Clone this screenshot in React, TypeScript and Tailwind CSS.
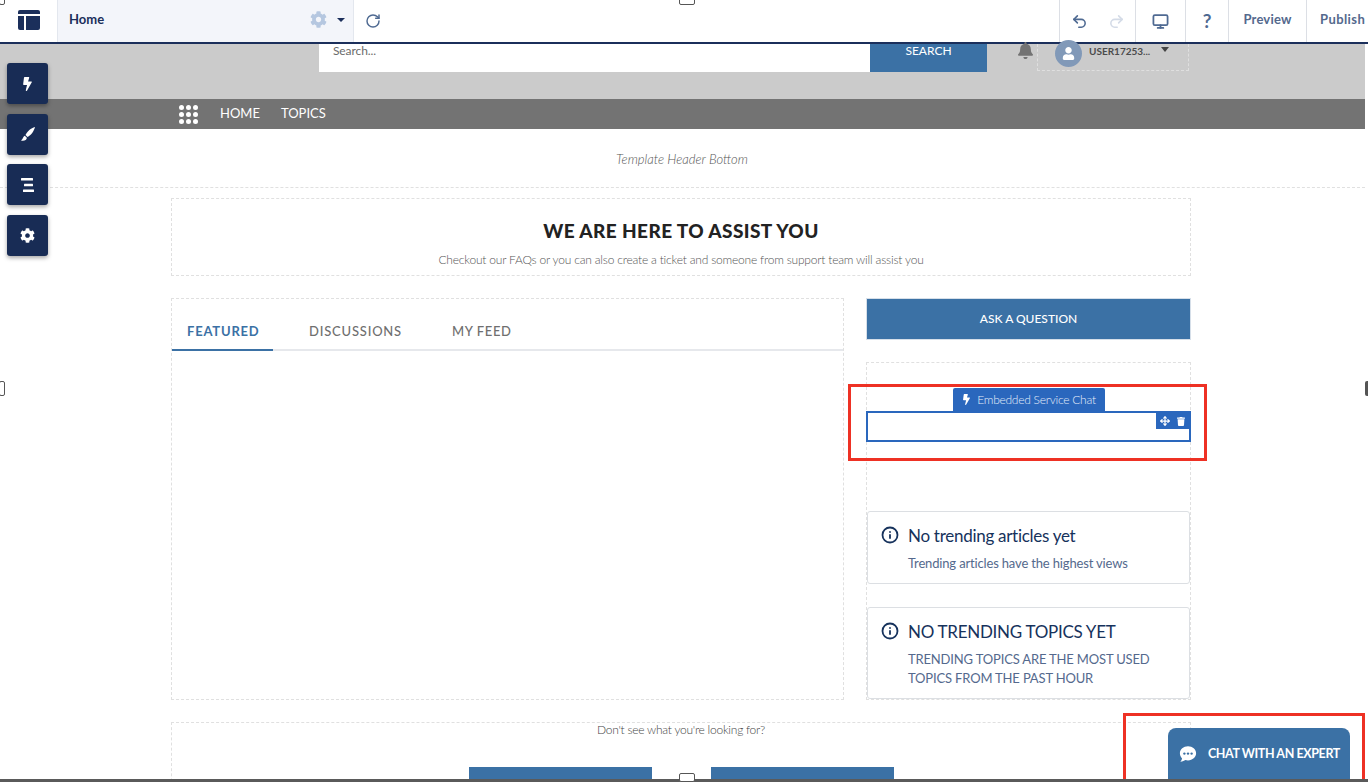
import { FaBell, FaBolt, FaCog, FaTrash, FaUser } from "react-icons/fa";
import { Info, Monitor, Move, Redo2, RotateCw, Undo2 } from "lucide-react";

function Toolbar() {
  return (
    <header className="h-[44px] flex border-b-2 border-[#1b2f5b] bg-white">
      <div className="w-[57px] flex items-center justify-center pb-[3px]">
        <svg viewBox="0 0 22 20" className="w-[22px] h-[20px] text-[#1b2f5b]" fill="currentColor">
          <path d="M2 0h18a2 2 0 0 1 2 2v2H0V2a2 2 0 0 1 2-2z" />
          <path d="M0 6h6v14H2a2 2 0 0 1-2-2z" />
          <path d="M8 6h14v12a2 2 0 0 1-2 2H8z" />
        </svg>
      </div>
      <div className="w-[297px] bg-[#f3f5fa] border-x border-[#e3e7ee] flex items-center pl-[11px] pb-[3px]">
        <span className="w-[241px] text-[13px] font-bold text-[#1b2f5b]">Home</span>
        <FaCog className="shrink-0 w-[17px] h-[17px] text-[#b5c7e0]" />
        <span className="ml-[10px] w-0 h-0 border-x-[4px] border-x-transparent border-t-[4px] border-t-[#1b2f5b]" />
      </div>
      <div className="flex-1 flex items-center pl-[11px] pb-[1px]">
        <RotateCw className="w-[16px] h-[16px] text-[#4f6a92]" strokeWidth={2.2} />
      </div>
      <div className="flex h-full">
        <div className="w-[76px] border-l border-[#dcdfe5] flex items-center justify-center gap-[20px]">
          <Undo2 className="w-[17px] h-[17px] text-[#4f6a92]" strokeWidth={2.2} />
          <Redo2 className="w-[17px] h-[17px] text-[#d4dbe7]" strokeWidth={2.2} />
        </div>
        <div className="w-[50px] border-l border-[#dcdfe5] flex items-center justify-center">
          <Monitor className="w-[17px] h-[17px] text-[#4f6a92]" strokeWidth={2.5} />
        </div>
        <div className="w-[43px] border-l border-[#dcdfe5] flex items-center justify-center text-[19px] font-bold text-[#4f6a92]">?</div>
        <div className="w-[78px] border-l border-[#dcdfe5] flex items-center justify-center pb-[3px] text-[13px] font-bold tracking-[0.2px] text-[#54698d]">Preview</div>
        <div className="w-[62px] border-l border-[#dcdfe5] flex items-center pl-[13px] pb-[3px] text-[13px] font-bold tracking-[0.4px] text-[#54698d]">Publish</div>
      </div>
    </header>
  );
}

function SiteHeader() {
  return (
    <>
      <div className="h-[55px] w-[1365px] bg-[#cbcbcb] flex items-start pl-[319px]">
        <div className="w-[551px] h-[28px] bg-white pl-[14px] text-[12px] leading-[13px] tracking-[-0.1px] text-[#6b6b6b]">Search...</div>
        <div className="w-[117px] h-[28px] bg-[#3b71a5] flex items-center justify-center text-[12px] leading-[13px] pb-[15px] text-white">SEARCH</div>
        <FaBell className="-mt-[2px] ml-[30px] w-[17px] h-[17px] text-[#737373]" />
        <div className="ml-[3px] w-[152px] h-[27px] border border-dashed border-[#dfdfdf] border-t-0 flex items-start pl-[17px]">
          <div className="-mt-[4px] w-[27px] h-[27px] rounded-full bg-[#8199b8] flex items-center justify-center">
            <FaUser className="w-[13px] h-[13px] text-white" />
          </div>
          <span className="ml-[7px] text-[10px] leading-[14px] font-bold text-[#4b4b4b]">USER17253...</span>
          <span className="ml-[11px] mt-[3px] w-0 h-0 border-x-[4px] border-x-transparent border-t-[5px] border-t-[#444]" />
        </div>
      </div>
      <nav className="h-[30px] w-[1365px] bg-[#737373] flex items-center pl-[179px] text-[13px] text-white">
        <div className="grid grid-cols-3 gap-[2px]">
          {[0, 1, 2, 3, 4, 5, 6, 7, 8].map((n) => (
            <span key={n} className="w-[5px] h-[5px] rounded-full bg-white" />
          ))}
        </div>
        <span className="ml-[22px]">HOME</span>
        <span className="ml-[21px]">TOPICS</span>
      </nav>
      <div className="h-[59px] w-[1365px] border-b border-dashed border-[#e0e0e0] flex items-center justify-center">
        <span className="text-[13px] italic font-light text-[#555] mt-[3px] -ml-[1px]">Template Header Bottom</span>
      </div>
    </>
  );
}

function Tabs() {
  return (
    <div className="w-[673px] h-[402px] border border-dashed border-[#e0e0e0]">
      <div className="mt-[16px] h-[36px] flex border-b-2 border-[#e6e8ec] text-[13px] font-bold tracking-[0.8px]">
        <div className="w-[101px] h-[36px] pl-[15px] pt-[7px] border-b-2 border-[#3b71a5] text-[#3b71a5]">FEATURED</div>
        <div className="ml-[36px] pt-[7px] text-[#6f6f6f] font-medium">DISCUSSIONS</div>
        <div className="ml-[50px] pt-[7px] text-[#6f6f6f] font-medium tracking-[0.6px]">MY FEED</div>
      </div>
    </div>
  );
}

function EmptyCard({ title, body, className }: { title: string; body: React.ReactNode; className: string }) {
  return (
    <div className={`mx-px border border-[#dcdfe3] rounded-[3px] flex pl-[13px] ${className}`}>
      <Info className="mt-[14px] w-[18px] h-[18px] text-[#16325c] shrink-0" strokeWidth={2.4} />
      <div className="ml-[9px]">
        <div className="mt-[13px] text-[17px] leading-[22px] tracking-[-0.28px] text-[#16325c]">{title}</div>
        <div className="mt-[7px] text-[13px] leading-[19px] tracking-[-0.16px] text-[#54698d]">{body}</div>
      </div>
    </div>
  );
}

function Sidebar() {
  return (
    <div className="w-[325px]">
      <div className="h-[42px] bg-[#3b71a5] border border-[#d6dfe9] flex items-center justify-center text-[12px] font-medium text-white">ASK A QUESTION</div>
      <div className="mt-[22px] h-[338px] border border-dashed border-[#e0e0e0]">
        <div className="relative -mx-px mt-[48px] h-[31px] border-2 border-[#2a67bd]">
          <div className="absolute -top-[25px] left-[85px] w-[152px] h-[23px] bg-[#2a67bd] rounded-t-[2px] flex items-center justify-center gap-[6px] text-[12px] tracking-[-0.25px] font-light text-[#e6eefa]">
            <FaBolt className="w-[9px] h-[11px] text-white" />
            Embedded Service Chat
          </div>
          <div className="absolute top-0 right-0 w-[33px] h-[16px] bg-[#2a67bd] flex items-center justify-center gap-[7px]">
            <Move className="w-[10px] h-[10px] text-white" strokeWidth={3} />
            <FaTrash className="w-[8px] h-[9px] text-white" />
          </div>
        </div>
        <div className="-mx-px">
          <EmptyCard className="mt-[69px] h-[73px]" title="No trending articles yet" body="Trending articles have the highest views" />
          <EmptyCard
            className="mt-[23px] h-[92px]"
            title="NO TRENDING TOPICS YET"
            body={
              <>
                TRENDING TOPICS ARE THE MOST USED
                <br />
                TOPICS FROM THE PAST HOUR
              </>
            }
          />
        </div>
      </div>
    </div>
  );
}

function SideButtons() {
  const icons = [
    <FaBolt key="bolt" className="w-[11px] h-[14px]" />,
    <svg key="brush" viewBox="0 0 14 14" className="w-[14px] h-[14px]" fill="currentColor">
      <path d="M14 0C10 1 6 4.500 4.500 8L6.500 10C10 8.500 13 4 14 0z" />
      <path d="M3.800 8.800C2 9.500 2.200 12 0 13.500C3 14.500 6 13 5.800 10.800z" />
    </svg>,
    <svg key="lines" viewBox="0 0 14 14" className="w-[14px] h-[14px]" fill="currentColor">
      <rect x="0" y="0" width="12" height="2.500" rx="0.500" />
      <rect x="3" y="5.700" width="9" height="2.500" rx="0.500" />
      <rect x="2" y="11.500" width="11" height="2.500" rx="0.500" />
    </svg>,
    <FaCog key="cog" className="w-[15px] h-[15px]" />,
  ];
  return (
    <div className="absolute left-[7px] top-[63px] flex flex-col gap-[9.5px]">
      {icons.map((icon, i) => (
        <div key={i} className="w-[41px] h-[41px] rounded-[3px] bg-[#182c55] text-white shadow-[0_2px_4px_rgba(0,0,0,0.35)] flex items-center justify-center">
          {icon}
        </div>
      ))}
    </div>
  );
}

function Handle({ className }: { className: string }) {
  return <div className={`absolute w-[16px] h-[9px] bg-white border border-[#555] rounded-[2px] ${className}`} />;
}

export default function App() {
  return (
    <div className="relative w-[1368px] h-[782px] overflow-hidden bg-white font-['Lato','Liberation_Sans',sans-serif]">
      <Toolbar />
      <SiteHeader />

      <main className="ml-[171px] w-[1020px]">
        <section className="mt-[10px] h-[78px] border border-dashed border-[#e0e0e0] flex flex-col items-center">
          <h2 className="mt-[20px] text-[19px] leading-[24px] font-black tracking-[0.4px] text-[#222]">WE ARE HERE TO ASSIST YOU</h2>
          <p className="mt-[9px] text-[12px] leading-[16px] font-light tracking-[-0.2px] text-[#555]">
            Checkout our FAQs or you can also create a ticket and someone from support team will assist you
          </p>
        </section>

        <div className="mt-[22px] flex justify-between">
          <Tabs />
          <Sidebar />
        </div>

        <section className="mt-[22px] h-[80px] border border-dashed border-[#e0e0e0] border-b-0 flex flex-col items-center">
          <p className="-mt-[1px] text-[12px] leading-[16px] font-light tracking-[-0.25px] text-[#444]">Don't see what you're looking for?</p>
          <div className="mt-[29px] flex gap-[59px]">
            <div className="w-[183px] h-[20px] bg-[#3b71a5]" />
            <div className="w-[183px] h-[20px] bg-[#3b71a5]" />
          </div>
        </section>
      </main>

      <SideButtons />

      <div className="absolute left-[1168px] top-[728px] w-[182px] h-[60px] rounded-t-[8px] bg-[#3b71a5] flex items-start pl-[11px] pt-[17px] text-white">
        <svg viewBox="0 0 20 20" className="w-[18px] h-[18px]">
          <path d="M10 1.500c5 0 9 3.400 9 7.800s-4 7.800-9 7.800c-1 0-2-.1-2.900-.4-1.200.9-3 1.700-5.600 1.900 1-1 1.700-2.200 1.900-3.600C1.900 13.500 1 11.500 1 9.300 1 4.900 5 1.500 10 1.500z" fill="white" />
          <circle cx="6" cy="9.500" r="1.300" fill="#3b71a5" />
          <circle cx="10" cy="9.500" r="1.300" fill="#3b71a5" />
          <circle cx="14" cy="9.500" r="1.300" fill="#3b71a5" />
        </svg>
        <span className="ml-[11px] text-[12.5px] leading-[18px] font-bold tracking-[-0.4px] whitespace-nowrap">CHAT WITH AN EXPERT</span>
      </div>

      {/* red annotation boxes */}
      <div className="absolute left-[848px] top-[384px] w-[359px] h-[77px] border-[3px] border-[#ee3124]" />
      <div className="absolute left-[1123px] top-[713px] w-[242px] h-[80px] border-[3px] border-[#ee3124]" />

      {/* frame edge and resize handles */}
      <div className="absolute left-0 right-0 top-[779px] h-[3px] bg-[#5a5a5a]" />
      <Handle className="left-[679px] -top-[4px]" />
      <Handle className="left-[679px] top-[773px]" />
      <div className="absolute -left-[1px] top-[381px] w-[6px] h-[15px] bg-white border border-[#555] rounded-[2px]" />
      <div className="absolute left-[1365px] top-[381px] w-[6px] h-[15px] bg-[#555] rounded-[2px]" />
      <div className="absolute -left-[1px] -top-[4px] w-[6px] h-[9px] bg-white border border-[#555] rounded-[2px]" />
    </div>
  );
}
